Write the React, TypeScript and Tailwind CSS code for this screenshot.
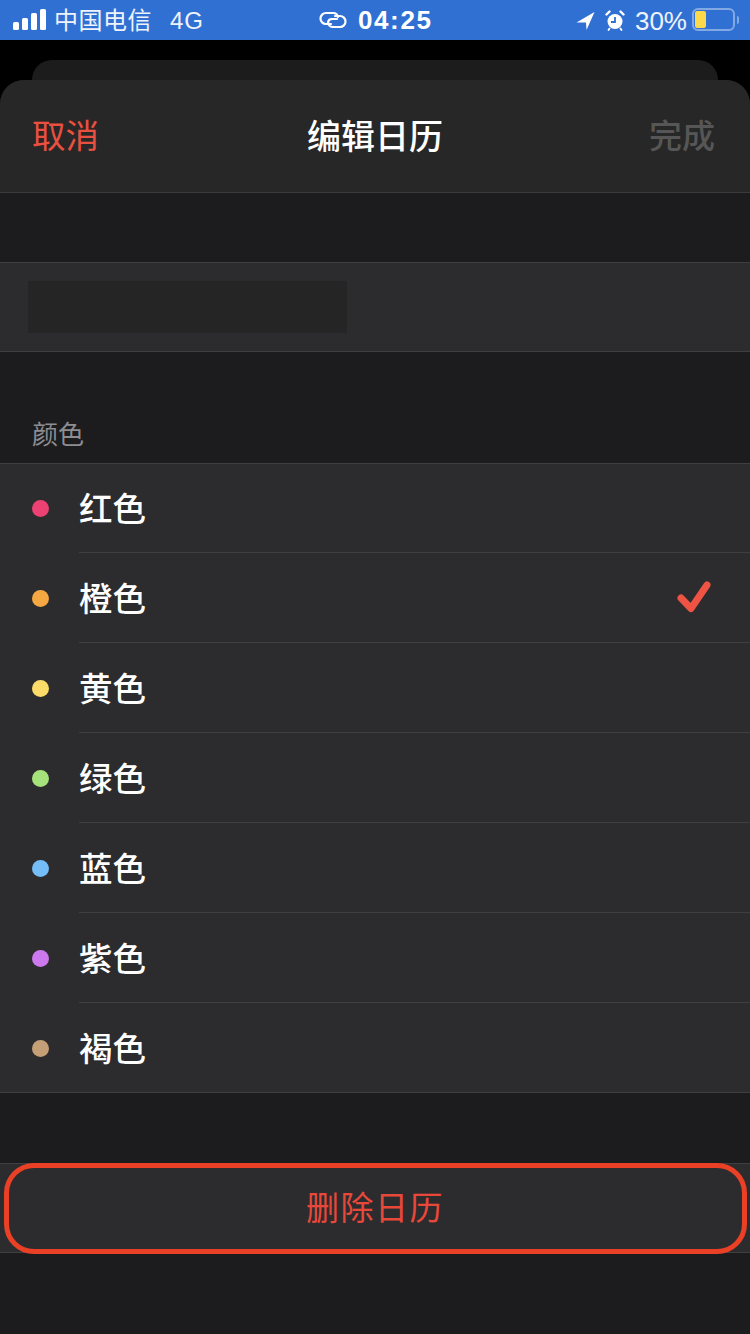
const colors = [
  { name: '红色', dot: 'bg-[#eb4273]' },
  { name: '橙色', dot: 'bg-[#f5a742]', checked: true },
  { name: '黄色', dot: 'bg-[#fbdc68]' },
  { name: '绿色', dot: 'bg-[#a5e27c]' },
  { name: '蓝色', dot: 'bg-[#74bdf7]' },
  { name: '紫色', dot: 'bg-[#cd79ee]' },
  { name: '褐色', dot: 'bg-[#c5a077]' },
]

function StatusBar() {
  return (
    <div className="h-10 bg-[#3170d3] flex items-center justify-between text-white relative">
      <div className="flex items-center pl-[13px]">
        <div className="flex items-end gap-[3px] h-[21px] -mt-[2px]">
          <span className="w-[6px] h-[8px] rounded-[1.5px] bg-white" />
          <span className="w-[6px] h-[12px] rounded-[1.5px] bg-white" />
          <span className="w-[6px] h-[17px] rounded-[1.5px] bg-white" />
          <span className="w-[6px] h-[21px] rounded-[1.5px] bg-white" />
        </div>
        <span className="ml-[8px] mt-[2px] text-[24px] tracking-[0.5px] leading-none text-[#eef3fb]">中国电信</span>
        <span className="ml-[18px] mt-[1px] text-[24px] font-medium leading-none text-[#eef3fb] tracking-[1px]">4G</span>
      </div>
      {/* centre: link icon and clock */}
      <div className="absolute left-[319px] top-0 h-10 flex items-center">
        <svg width="28" height="18" viewBox="0 0 28 18" fill="none" stroke="white" strokeWidth="2.2">
          <path d="M12 13H7a5 5 0 0 1 0-11h7a5 5 0 0 1 5 4" strokeLinecap="round" />
          <path d="M16 5h5a5 5 0 0 1 0 11h-7a5 5 0 0 1-5-4.5 4 4 0 0 1 4-3.5h5" strokeLinecap="round" />
        </svg>
        <span className="ml-[11px] text-[26px] font-bold tracking-[1.6px] leading-none">04:25</span>
      </div>
      <div className="flex items-center pr-[11px]">
        <svg width="19" height="19" viewBox="0 0 19 19" fill="white">
          <path d="M18.500 1 .5 11.500h9.500l.5 7.500z" />
        </svg>
        <svg className="ml-[10px]" width="20" height="21" viewBox="0 0 20 21" fill="none">
          <circle cx="10" cy="11.500" r="7.500" fill="white" />
          <path d="M10 7v5H6" stroke="#3170d3" strokeWidth="1.800" />
          <path d="M1.500 4.500 4.500 1.500M18.500 4.500l-3-3" stroke="white" strokeWidth="2.400" strokeLinecap="round" />
          <path d="M4.500 18.500 3.500 20M15.500 18.500l1 1.500" stroke="white" strokeWidth="1.800" strokeLinecap="round" />
        </svg>
        <span className="ml-[10px] mt-[1px] text-[26px] leading-none text-[#eef3fb]">30%</span>
        <div className="ml-[5px] flex items-center -mt-[1px]">
          <div className="w-[43px] h-[23px] rounded-[6px] border-2 border-white/40 p-px flex">
            <div className="w-[11px] rounded-[2px] bg-[#fcd94a]" />
          </div>
          <div className="ml-[2px] w-[2px] h-[8px] rounded-r bg-white/40" />
        </div>
      </div>
    </div>
  )
}

export default function App() {
  return (
    <div className="relative w-[750px] h-[1334px] overflow-hidden bg-black font-['Liberation_Sans','Noto_Sans_CJK_SC',sans-serif]">
      <StatusBar />

      {/* card behind the sheet */}
      <div className="mt-5 mx-8 h-5 rounded-t-[20px] bg-[#1c1c1c]" />

      <div className="h-[1254px] rounded-t-[24px] bg-[#1c1c1e] overflow-hidden">
        {/* Header */}
        <div className="h-[113px] bg-[#272727] border-b border-[#3b3b3d] flex items-center justify-between pl-[32px] pr-[35px] pt-[2px] relative">
          <span className="text-[33.500px] text-[#e9503f]">取消</span>
          <span className="absolute left-0 right-0 text-center text-[34px] font-medium text-white">编辑日历</span>
          <span className="text-[33px] font-medium text-[#565656]">完成</span>
        </div>

        <div className="h-[69px]" />

        {/* Name field */}
        <div className="h-[90px] bg-[#2c2c2e] border-y border-[#3f3f41] pl-[28px] pt-[18px]">
          <div className="w-[319px] h-[52px] bg-[#252525]" />
        </div>

        {/* Colour list */}
        <div className="h-[111px] flex items-end pl-[32px] pb-[15px]">
          <span className="text-[26px] leading-none text-[#8d8d92]">颜色</span>
        </div>
        <div className="bg-[#2c2c2e]">
          {colors.map((c, i) => (
            <div key={c.name} className="h-[90px] flex items-center pl-[32px] relative">
              {i === 0 && <div className="absolute left-0 right-0 top-0 h-px bg-[#3f3f41]" />}
              <span className={`w-[17px] h-[17px] rounded-full ${c.dot}`} />
              <span className="ml-[30px] mt-[4px] text-[33.500px] font-medium text-white">{c.name}</span>
              {c.checked && (
                <svg className="ml-auto mr-[37px]" width="38" height="38" viewBox="0 0 38 38" fill="none" stroke="#ef5344" strokeWidth="7" strokeLinecap="round" strokeLinejoin="round">
                  <path d="M6 19l10 10.500L32 6" />
                </svg>
              )}
              <div className={i === colors.length - 1 ? 'absolute left-0 right-0 bottom-0 h-px bg-[#3f3f41]' : 'absolute left-[79px] right-0 bottom-0 h-px bg-[#3f3f41]'} />
            </div>
          ))}
        </div>

        <div className="h-[70px]" />

        {/* Delete button */}
        <div className="h-[90px] bg-[#2c2c2e] border-y border-[#3f3f41] flex items-center justify-center">
          <span className="mt-[2px] text-[33px] tracking-[1.500px] text-[#e8483a]">删除日历</span>
        </div>
      </div>

      {/* annotation outline */}
      <div className="absolute left-[4px] top-[1163px] w-[743px] h-[91px] rounded-[30px] border-[5px] border-[#e94026]" />
    </div>
  )
}
